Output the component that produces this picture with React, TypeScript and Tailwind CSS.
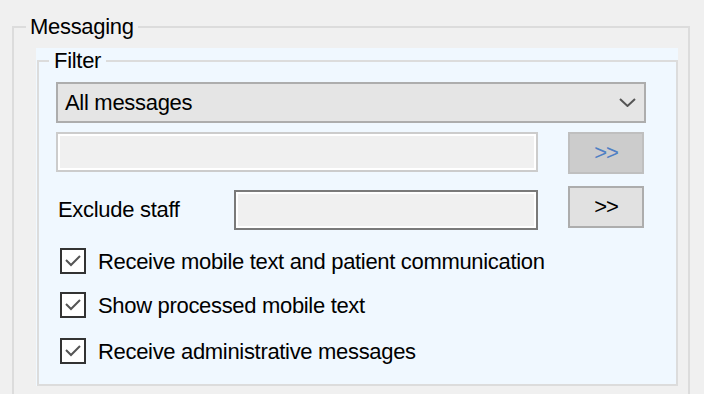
import React from "react";

const font = { fontFamily: "'Liberation Sans', Arial, sans-serif" };

function Check({ label, className }: { label: string; className?: string }) {
  return (
    <div className={"flex items-center h-[26px] " + (className ?? "")}>
      <div className="ml-[4px] w-[26px] h-[26px] border-2 border-[#333333] bg-white flex items-center justify-center">
        <svg width="18" height="14" viewBox="0 0 18 14">
          <polyline points="2,6 7,11 16,2" fill="none" stroke="#555555" strokeWidth="2" />
        </svg>
      </div>
      <span className="ml-[12px] pt-[2px] text-[22px] tracking-[-0.32px] leading-[26px] text-black whitespace-nowrap">{label}</span>
    </div>
  );
}

export default function App() {
  return (
    <div className="w-[704px] h-[394px] overflow-hidden bg-[#f0f0f0] pt-[14px] pl-[12px]" style={font}>
      <fieldset className="w-[678px] border-2 border-[#dcdcdc] pl-[22px] pr-[10px] pt-[8px] pb-[20px]">
        <legend className="-ml-[10px] px-[4px] text-[22px] tracking-[-0.3px] leading-[26px] text-black">Messaging</legend>
        <div className="bg-[#f0f8ff] pl-[1px]">
          <fieldset className="h-[338px] border-2 border-[#dcdcdc] pl-[17px] pr-[30px] pt-[8px]">
            <legend className="-ml-[7px] px-[5px] text-[22px] tracking-[-0.3px] leading-[26px] text-black">Filter</legend>
            <div className="h-[41px] w-full border-2 border-[#adadad] bg-[#e5e5e5] flex items-center pl-[7px] pr-[8px]">
              <span className="flex-1 pt-[1px] text-[22px] tracking-[-0.3px] leading-[26px] text-black">All messages</span>
              <svg width="17" height="9" viewBox="0 0 17 9">
                <polyline points="1,1 8.5,8 16,1" fill="none" stroke="#555555" strokeWidth="2" />
              </svg>
            </div>
            <div className="flex items-start mt-[9px]">
              <div className="w-[482px] h-[40px] border-2 border-[#cccccc] bg-[#f0f0f0] shadow-[inset_0_0_0_2px_#ffffff]" />
              <div className="ml-[30px] w-[76px] h-[42px] border-2 border-[#bfbfbf] bg-[#cccccc] flex items-center justify-center text-[22px] tracking-[-1px] leading-[26px] text-[#4f7fc4]">
                &gt;&gt;
              </div>
            </div>
            <div className="flex items-start mt-[12px]">
              <div className="w-[178px] pl-[2px] pt-[11px] text-[22px] tracking-[-0.3px] leading-[26px] text-black whitespace-nowrap">Exclude staff</div>
              <div className="mt-[4px] w-[304px] h-[40px] border-2 border-[#7a7a7a] bg-[#f0f0f0] shadow-[inset_0_0_0_2px_#ffffff]" />
              <div className="ml-[30px] w-[76px] h-[42px] border-2 border-[#adadad] bg-[#e1e1e1] flex items-center justify-center text-[22px] tracking-[-1px] leading-[26px] text-black">
                &gt;&gt;
              </div>
            </div>
            <Check className="mt-[18px]" label="Receive mobile text and patient communication" />
            <Check className="mt-[18px]" label="Show processed mobile text" />
            <Check className="mt-[20px]" label="Receive administrative messages" />
          </fieldset>
        </div>
      </fieldset>
    </div>
  );
}
